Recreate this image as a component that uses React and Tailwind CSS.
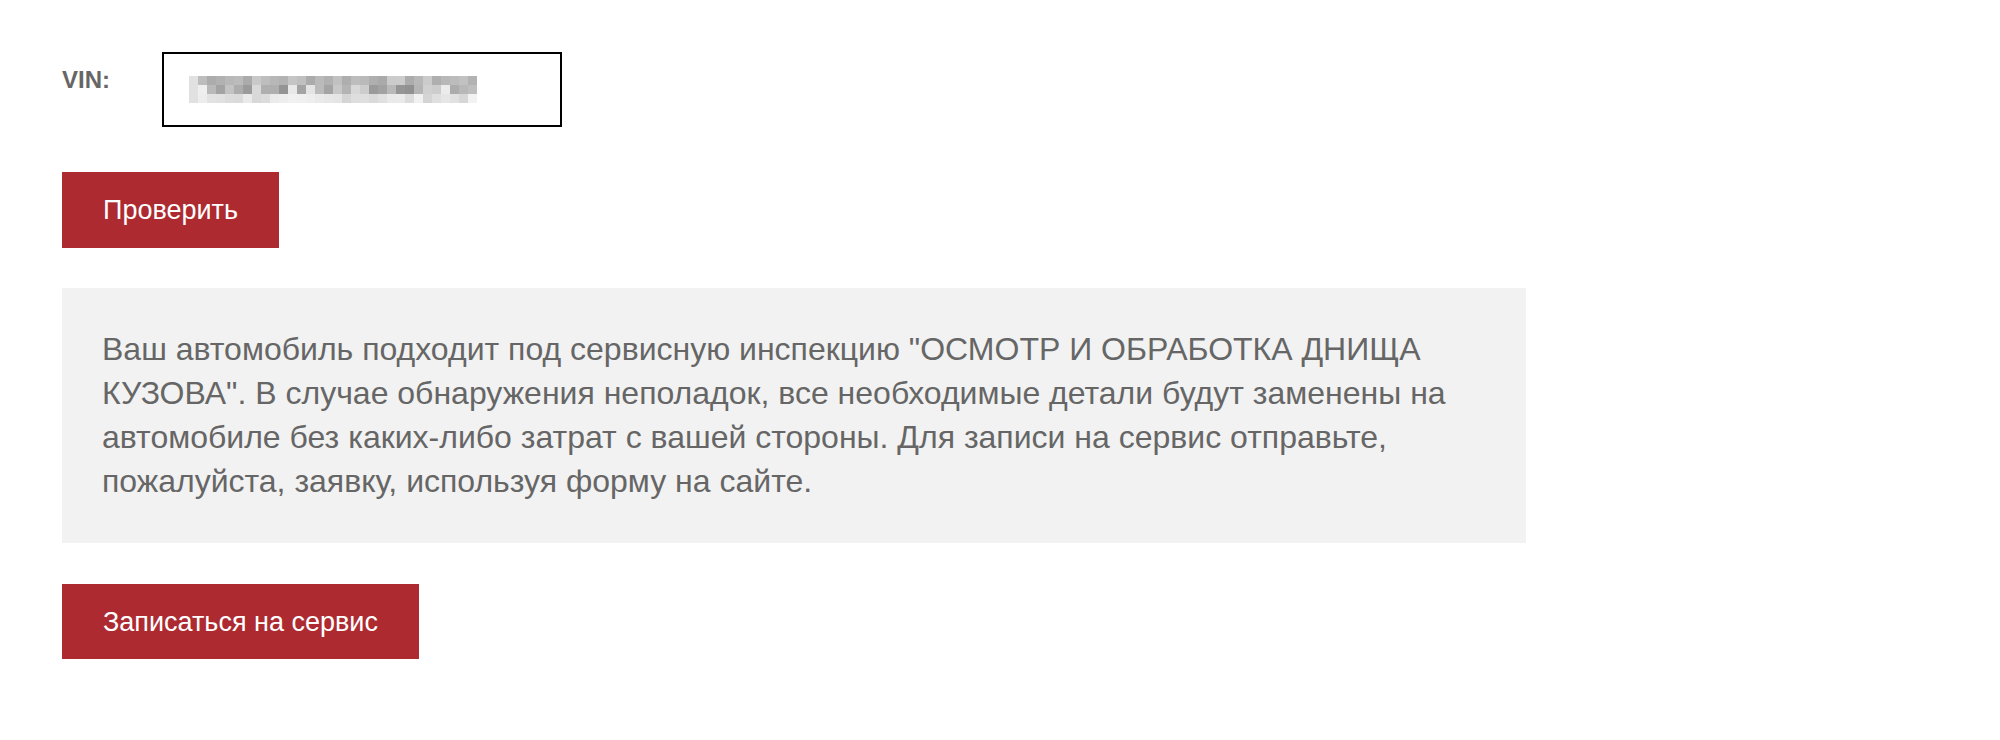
import React from "react";

function Mosaic() {
  const cols = 32;
  const rows = 3;
  const cells = [];
  let seed = 7;
  const rnd = () => {
    seed = (seed * 9301 + 49297) % 233280;
    return seed / 233280;
  };
  const ranges = [
    [168, 205],
    [140, 240],
    [212, 242],
  ];
  for (let r = 0; r < rows; r++) {
    for (let c = 0; c < cols; c++) {
      const [lo, hi] = ranges[r];
      let v = Math.round(lo + rnd() * (hi - lo));
      if (c === 0) v = Math.max(v, 225);
      const hex = v.toString(16).padStart(2, "0");
      cells.push(
        <rect key={`${r}-${c}`} x={c * 9} y={r * 9} width="9" height="9" fill={`#${hex}${hex}${hex}`} />
      );
    }
  }
  return (
    <svg width={cols * 9} height={rows * 9} viewBox={`0 0 ${cols * 9} ${rows * 9}`} shapeRendering="crispEdges">
      {cells}
    </svg>
  );
}

export default function App() {
  return (
    <div className="min-h-[740px] w-[2000px] bg-white pl-[62px] pt-[52px]" style={{ fontFamily: '"Liberation Sans", Arial, sans-serif' }}>
      <div className="flex items-start">
        <div className="w-[100px] pt-[16px] text-[24px] font-bold leading-[24px] text-[#666666]">VIN:</div>
        <div className="box-border flex h-[75px] w-[400px] items-center border-2 border-black bg-white pl-[25px]">
          <Mosaic />
        </div>
      </div>

      <button className="mt-[45px] flex h-[76px] items-center bg-[#ad2a31] px-[41px] text-[27px] leading-[32px] text-white">
        Проверить
      </button>

      <div className="mt-[40px] w-[1464px] bg-[#f2f2f2] pb-[40px] pl-[40px] pr-[40px] pt-[39px] text-[32px] leading-[44px] text-[#666666]">
        Ваш автомобиль подходит под сервисную инспекцию "ОСМОТР И ОБРАБОТКА ДНИЩА КУЗОВА". В случае обнаружения неполадок, все необходимые детали будут заменены на автомобиле без каких-либо затрат с вашей стороны. Для записи на сервис отправьте, пожалуйста, заявку, используя форму на сайте.
      </div>

      <button className="mt-[41px] flex h-[75px] items-center bg-[#ad2a31] px-[41px] text-[27px] leading-[32px] text-white">
        Записаться на сервис
      </button>
    </div>
  );
}
